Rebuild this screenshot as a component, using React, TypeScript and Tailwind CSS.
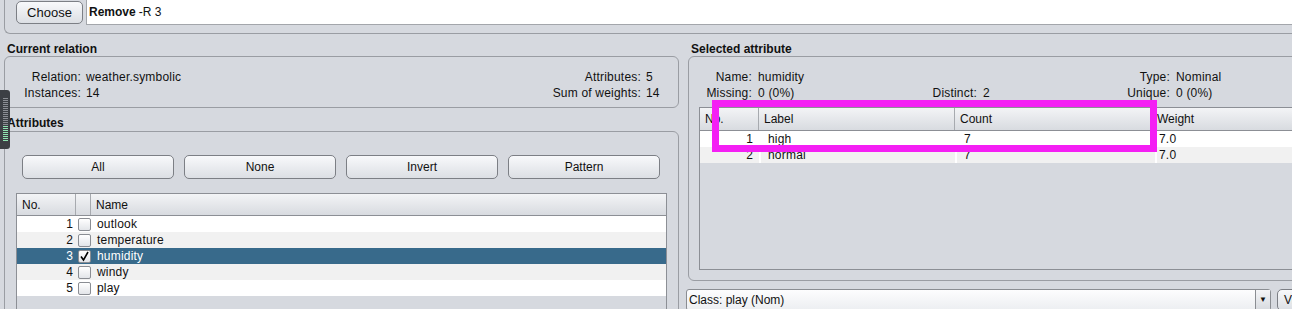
const ATTRS = [
  { no: 1, name: 'outlook', checked: false },
  { no: 2, name: 'temperature', checked: false },
  { no: 3, name: 'humidity', checked: true },
  { no: 4, name: 'windy', checked: false },
  { no: 5, name: 'play', checked: false },
]

const LABELS = [
  { no: 1, label: 'high', count: '7', weight: '7.0' },
  { no: 2, label: 'normal', count: '7', weight: '7.0' },
]

function Checkbox({ checked }: { checked: boolean }) {
  return (
    <div className="w-[13px] h-[13px] rounded-[2px] border border-[#8a8d93] bg-linear-to-b from-[#ffffff] to-[#e3e5e9] flex items-center justify-center">
      {checked && (
        <svg width="11" height="11" viewBox="0 0 11 11">
          <path d="M2 5.5 L4.5 9 L9 1" stroke="#000" strokeWidth="1.6" fill="none" />
        </svg>
      )}
    </div>
  )
}

function Button({ label, className = '' }: { label: string; className?: string }) {
  return (
    <div
      className={`flex items-center justify-center rounded-[5px] border border-[#7c7f85] bg-linear-to-b from-[#f8f9fb] to-[#dcdfe4] ${className}`}
    >
      {label}
    </div>
  )
}

function Handle() {
  const lines = Array.from({ length: 22 }, (_, i) => i)
  return (
    <div className="absolute left-0 top-[90px] w-[10px] h-[59px] bg-[#3c3f44] rounded-r-[3px] flex flex-col items-start pt-[8px] pl-[3px] gap-[1px]">
      {lines.map(i => (
        <div key={i} className={`w-[5px] h-[1px] ${i < 14 ? 'bg-[#8b8e94]' : 'bg-[#8fe3b0]'}`} />
      ))}
    </div>
  )
}

export default function App() {
  return (
    <div className="relative w-[1292px] h-[309px] overflow-hidden bg-[#d6d9df] text-[12px] leading-[14px] text-[#111] font-['Liberation_Sans',Arial,sans-serif]">
      {/* Filter bar */}
      <div className="h-[34px] pl-[4px]">
        <div className="h-[34px] border-l border-b border-[#9a9da3] rounded-bl-[6px] flex items-start pl-[11px]">
          <Button label="Choose" className="mt-[1px] w-[67px] h-[23px] text-[13px]" />
          <div className="ml-[3px] flex-1 h-[25px] bg-white border-l border-b border-[#a3a6ab] flex items-center pl-[2px]">
            <span className="font-bold">Remove</span>
            <span className="ml-[3px]">-R 3</span>
          </div>
        </div>
      </div>

      <div className="flex">
        {/* Left column */}
        <div className="w-[684px] shrink-0 pl-[4px] pr-[5px] flex flex-col">
          <div className="h-[22px] pt-[8px] pl-[3px] font-bold">Current relation</div>
          <div className="h-[52px] border border-[#9a9da3] rounded-[6px] flex items-start justify-between pt-[13px] tracking-[0.2px]">
            <div className="grid grid-cols-[76px_auto] gap-x-[5px]">
              <div className="h-[16px] text-right">Relation:</div>
              <div className="h-[16px]">weather.symbolic</div>
              <div className="h-[16px] text-right">Instances:</div>
              <div className="h-[16px]">14</div>
            </div>
            <div className="grid grid-cols-[auto_32px] gap-x-[5px]">
              <div className="h-[16px] text-right">Attributes:</div>
              <div className="h-[16px]">5</div>
              <div className="h-[16px] text-right">Sum of weights:</div>
              <div className="h-[16px]">14</div>
            </div>
          </div>

          <div className="h-[23px] pt-[8px] pl-[3px] font-bold">Attributes</div>
          <div className="h-[200px] border border-[#9a9da3] rounded-t-[6px] pt-[23px]">
            <div className="flex gap-[10px] pl-[17px]">
              <Button label="All" className="w-[152px] h-[24px]" />
              <Button label="None" className="w-[152px] h-[24px]" />
              <Button label="Invert" className="w-[152px] h-[24px]" />
              <Button label="Pattern" className="w-[152px] h-[24px]" />
            </div>
            <div className="ml-[11px] mt-[14px] w-[651px] h-[150px] border border-[#8c8f95] bg-[#d6d9df]">
              <div className="h-[22px] flex border-b border-[#8c8f95] bg-linear-to-b from-[#f3f4f6] to-[#d8dbe0]">
                <div className="w-[59px] pl-[5px] flex items-center border-r border-[#a7aaaf]">No.</div>
                <div className="w-[15px] border-r border-[#a7aaaf]" />
                <div className="flex-1 pl-[5px] flex items-center">Name</div>
              </div>
              {ATTRS.map((a, i) => (
                <div
                  key={a.no}
                  className={`h-[16px] flex items-center tracking-[0.2px] ${
                    a.checked ? 'bg-[#386a8b] text-white' : i % 2 === 0 ? 'bg-white' : 'bg-[#f1f1f1]'
                  }`}
                >
                  <div className="w-[56px] text-right">{a.no}</div>
                  <div className="w-[18px] flex justify-end">
                    <Checkbox checked={a.checked} />
                  </div>
                  <div className="pl-[6px]">{a.name}</div>
                </div>
              ))}
            </div>
          </div>
        </div>

        {/* Right column */}
        <div className="w-[700px] shrink-0 pl-[4px] flex flex-col">
          <div className="h-[22px] pt-[8px] pl-[3px] font-bold">Selected attribute</div>
          <div className="w-[640px] h-[225px] border border-[#9a9da3] rounded-[6px] pt-[13px]">
            <div className="h-[16px] flex tracking-[0.2px]">
              <div className="w-[63px] text-right">Name:</div>
              <div className="ml-[6px] w-[170px]">humidity</div>
              <div className="w-[49px]" />
              <div className="ml-[6px] w-[117px]" />
              <div className="w-[70px] text-right">Type:</div>
              <div className="ml-[6px]">Nominal</div>
            </div>
            <div className="h-[16px] flex tracking-[0.2px]">
              <div className="w-[63px] text-right">Missing:</div>
              <div className="ml-[6px] w-[170px]">0 (0%)</div>
              <div className="w-[49px] text-right">Distinct:</div>
              <div className="ml-[6px] w-[117px]">2</div>
              <div className="w-[70px] text-right">Unique:</div>
              <div className="ml-[6px]">0 (0%)</div>
            </div>
            <div className="ml-[10px] mt-[5px] h-[163px] border border-[#8c8f95]">
              <div className="h-[23px] flex border-b border-[#8c8f95] bg-linear-to-b from-[#f3f4f6] to-[#d8dbe0]">
                <div className="w-[59px] pl-[5px] flex items-center border-r border-[#a7aaaf]">No.</div>
                <div className="w-[196px] pl-[5px] flex items-center border-r border-[#a7aaaf]">Label</div>
                <div className="w-[200px] pl-[5px] flex items-center border-r border-[#a7aaaf]">Count</div>
                <div className="flex-1 pl-[2px] flex items-center">Weight</div>
              </div>
              {LABELS.map((l, i) => {
                const bg = i % 2 ? 'bg-[#f1f1f1]' : 'bg-white'
                return (
                  <div key={l.no} className="h-[16px] flex tracking-[0.2px]">
                    <div className={`w-[59px] pr-[6px] flex items-center justify-end ${bg}`}>{l.no}</div>
                    <div className={`w-[196px] pl-[7px] flex items-center border-l-2 border-white ${bg}`}>{l.label}</div>
                    <div className={`w-[200px] pl-[7px] flex items-center border-l-2 border-white ${bg}`}>{l.count}</div>
                    <div className={`flex-1 pl-[2px] flex items-center border-l-2 border-white ${bg}`}>{l.weight}</div>
                  </div>
                )
              })}
            </div>
          </div>

          <div className="flex mt-[8px] -ml-[2px] gap-[6px]">
            <div className="w-[585px] h-[22px] flex border border-[#8a8d92] rounded-[3px] bg-linear-to-b from-[#fdfdfe] to-[#eceef1]">
              <div className="flex-1 pl-[2px] flex items-center">Class: play (Nom)</div>
              <div className="w-[15px] border-l border-[#8a8d92] flex items-center justify-center text-[8px] bg-linear-to-b from-[#f4f5f7] to-[#d7dadf]">▼</div>
            </div>
            <Button label="Visualize All" className="w-[100px] h-[22px] rounded-[3px] justify-start! pl-[6px]" />
          </div>
        </div>
      </div>

      {/* Highlight box */}
      <div className="absolute left-[712px] top-[100px] w-[445px] h-[52px] border-[7px] border-[#f41ff4]" />

      <Handle />
    </div>
  )
}
